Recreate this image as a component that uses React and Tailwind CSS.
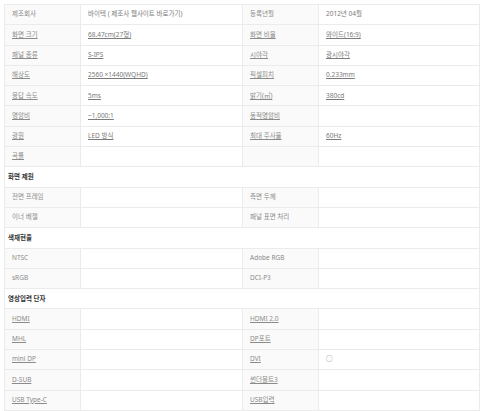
import React from 'react';

// spec rows: [label, value, label, value, underline]
const groups = [
  {
    title: null,
    rows: [
      ['제조회사', '바이텍 ( 제조사 웹사이트 바로가기)', '등록년월', '2012년 04월', false],
      ['화면 크기', '68.47cm(27형)', '화면 비율', '와이드(16:9)', true],
      ['패널 종류', 'S-IPS', '시야각', '광시야각', true],
      ['해상도', '2560 ×1440(WQHD)', '픽셀피치', '0.233mm', true],
      ['응답 속도', '5ms', '밝기(㎡)', '380cd', true],
      ['명암비', '~1,000:1', '동적명암비', '', true],
      ['광원', 'LED 방식', '최대 주사율', '60Hz', true],
      ['곡률', '', '', '', true],
    ],
  },
  {
    title: '화면 제원',
    rows: [
      ['전면 프레임', '', '측면 두께', '', false],
      ['이너 베젤', '', '패널 표면 처리', '', false],
    ],
  },
  {
    title: '색재현율',
    rows: [
      ['NTSC', '', 'Adobe RGB', '', false],
      ['sRGB', '', 'DCI-P3', '', false],
    ],
  },
  {
    title: '영상입력 단자',
    rows: [
      ['HDMI', '', 'HDMI 2.0', '', true],
      ['MHL', '', 'DP포트', '', true],
      ['mini DP', '', 'DVI', '○', true],
      ['D-SUB', '', '썬더볼트3', '', true],
      ['USB Type-C', '', 'USB입력', '', true],
    ],
  },
];

const Cell = ({ text, label, link, width }) => (
  <div
    className={`flex items-center h-full px-[7px] border-r border-[#ebebeb] last:border-r-0 ${
      label ? 'bg-[#fafafa] text-[#8a8a8a]' : 'bg-white text-[#7a7a7a]'
    } ${width}`}
  >
    <span className={link && text !== '○' ? 'underline underline-offset-1' : ''}>{text}</span>
  </div>
);

export default function App() {
  return (
    <div
      className="w-[500px] h-[411px] bg-white pt-[4px] pl-[4px] overflow-hidden text-[6.5px] leading-none"
      style={{ fontFamily: '"Noto Sans", "Noto Sans CJK KR", sans-serif' }}
    >
      <div className="w-[476px] border-t border-x border-[#ebebeb]">
        {groups.map((g, gi) => (
          <React.Fragment key={gi}>
            {g.title && (
              <div className="h-[20.3px] flex items-center pl-[3px] border-b border-[#ebebeb] font-bold text-[#333]">
                {g.title}
              </div>
            )}
            {g.rows.map((r, ri) => (
              <div key={ri} className="h-[20.3px] flex border-b border-[#ebebeb]">
                <Cell text={r[0]} label link={r[4]} width="w-[76px]" />
                <Cell text={r[1]} link={r[4]} width="w-[162px]" />
                <Cell text={r[2]} label link={r[4]} width="w-[76px]" />
                <Cell text={r[3]} link={r[4]} width="flex-1" />
              </div>
            ))}
          </React.Fragment>
        ))}
      </div>
    </div>
  );
}
